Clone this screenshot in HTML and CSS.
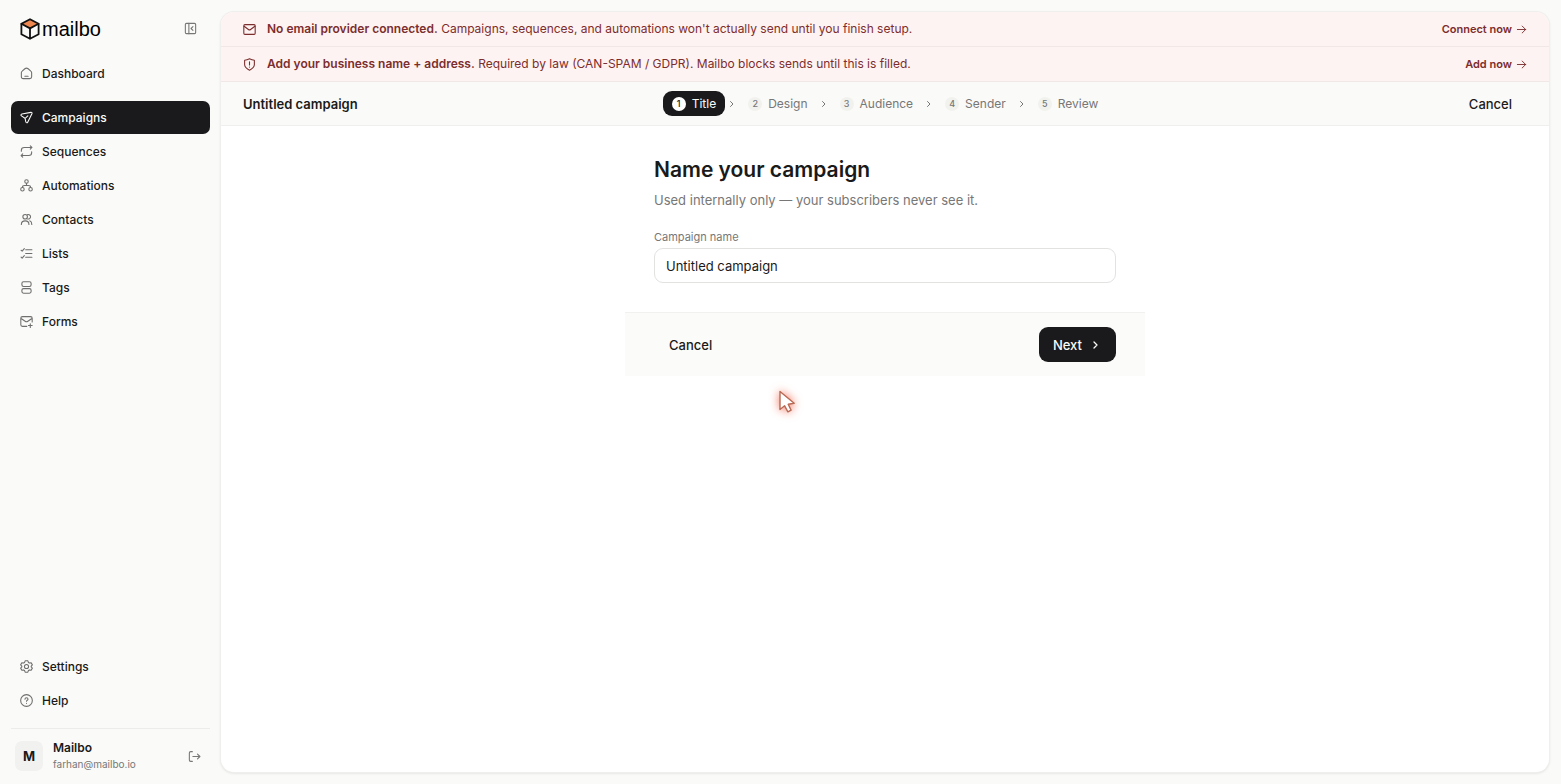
FILE: index.html
```html
<!DOCTYPE html>
<html lang="en">
<head>
  <meta charset="UTF-8" />
  <title>Untitled campaign - Mailbo</title>
  <meta name="viewport" content="width=device-width, initial-scale=1.0" />
  <link rel="stylesheet" href="styles.css">
</head>
<body>
  <div class="app">

    <!-- Sidebar -->
    <aside class="sidebar">
      <div class="brand-row">
        <a href="#" class="brand">
          <svg class="brand-mark" viewBox="0 0 20 22">
            <path d="M10 1.2 18.6 5.8 10 10.4 1.4 5.8Z" fill="#ee8650"/>
            <path d="M1.4 5.8v10.4L10 20.8l8.6-4.6V5.8M10 10.4v10.4"/>
          </svg>
          <span class="brand-name">mailbo</span>
        </a>
        <button class="icon-button" aria-label="Collapse sidebar">
          <svg class="icon" viewBox="0 0 24 24"><rect x="2.5" y="2.5" width="19" height="19" rx="2"/><path d="M9 2.5v19M16.500 8.500 13 12l3.500 3.500"/></svg>
        </button>
      </div>

      <nav class="nav nav-main">
        <a href="#" class="nav-item nav-home">
          <svg class="icon" viewBox="0 0 24 24"><path d="M2.500 10.500c0-1.300.5-2.200 1.500-3L9 3.300c1.800-1.500 4.200-1.500 6 0L20 7.500c1 .8 1.500 1.700 1.500 3V18c0 2.300-1.200 3.500-3.500 3.500H6c-2.300 0-3.500-1.200-3.500-3.500ZM9 17h6"/></svg>
          Dashboard
        </a>
        <a href="#" class="nav-item active">
          <svg class="icon" viewBox="0 0 24 24"><path d="M20 2.500 3.500 5.500c-2 .4-2.300 2.500-.8 3.500l5.800 3.800c.7.500 1 1 1.100 1.800l1.200 5.700c.4 1.800 2.600 2 3.400.4L22 5c.7-1.500-.4-2.800-2-2.500ZM9.500 13.500 14.500 9"/></svg>
          Campaigns
        </a>
        <a href="#" class="nav-item">
          <svg class="icon" viewBox="0 0 24 24"><path d="M19 1.500 22 4.500l-3 3M22 4.500H8c-3.500 0-5.500 1.500-5.500 5v2M5 22.500 2 19.500l3-3M2 19.500h14c3.500 0 5.500-1.500 5.500-5v-2"/></svg>
          Sequences
        </a>
        <a href="#" class="nav-item">
          <svg class="icon" viewBox="0 0 24 24"><circle cx="12" cy="4.500" r="3.200"/><circle cx="4.500" cy="19" r="3.200"/><circle cx="19.500" cy="19" r="3.200"/><path d="M12 8v4M4.500 15.500c0-2.500 2-3.500 4-3.500h7c2 0 4 1 4 3.500"/></svg>
          Automations
        </a>
        <a href="#" class="nav-item">
          <svg class="icon" viewBox="0 0 24 24"><circle cx="9.500" cy="7" r="4.200"/><path d="M14 3a4.200 4.200 0 1 1 0 8M2.500 21c0-4.500 2.500-6.500 7-6.500s7 2 7 6.500M18 14.500c2.500.8 3.800 2.800 3.800 6.500"/></svg>
          Contacts
        </a>
        <a href="#" class="nav-item">
          <svg class="icon" viewBox="0 0 24 24"><path d="M10.500 5H22M10.500 12H22M10.500 19H22M2 6l2 1.500L8 3M2 18.500 4 20.500 8 16"/></svg>
          Lists
        </a>
        <a href="#" class="nav-item">
          <svg class="icon" viewBox="0 0 24 24"><rect x="3.500" y="1.500" width="17" height="8.500" rx="3"/><rect x="3.500" y="14" width="17" height="8.500" rx="3"/></svg>
          Tags
        </a>
        <a href="#" class="nav-item">
          <svg class="icon" viewBox="0 0 24 24"><path d="M12.500 21H4.500c-2 0-3-1-3-3V6c0-2 1-3 3-3h15c2 0 3 1 3 3v7M2 6.500l7.500 5c1.700 1.200 3.300 1.200 5 0l7.500-5M19 16v7M15.500 19.500h7"/></svg>
          Forms
        </a>
      </nav>

      <nav class="nav nav-bottom">
        <a href="#" class="nav-item">
          <svg class="icon" viewBox="0 0 24 24"><path d="M9.500 1.500h5l1 3 2 1.200 3.100-.7 2.200 4-2.100 2.200v1.600l2.100 2.200-2.200 4-3.100-.7-2 1.200-1 3h-5l-1-3-2-1.200-3.100.7-2.200-4 2.100-2.200v-1.600L1.200 9l2.200-4 3.100.7 2-1.200Z"/><circle cx="12" cy="12" r="3.800"/></svg>
          Settings
        </a>
        <a href="#" class="nav-item">
          <svg class="icon" viewBox="0 0 24 24"><circle cx="12" cy="12" r="10.800"/><path d="M9.200 9.500c0-1.500 1.200-2.700 2.800-2.700s2.800 1.200 2.800 2.700c0 2-2.800 2-2.800 4M12 17v.3"/></svg>
          Help
        </a>
      </nav>

      <div class="account">
        <div class="avatar">M</div>
        <div class="account-info">
          <div class="account-name">Mailbo</div>
          <div class="account-email">farhan@mailbo.io</div>
        </div>
        <button class="icon-button" aria-label="Log out">
          <svg class="icon" viewBox="0 0 24 24"><path d="M8 3H5C3.500 3 2.500 4 2.500 5.500v13C2.500 20 3.500 21 5 21h3M9 12h13M17.500 7.500 22 12l-4.500 4.500"/></svg>
        </button>
      </div>
    </aside>

    <!-- Main panel -->
    <main class="panel">
      <div class="banner">
        <svg class="icon" viewBox="0 0 24 24"><rect x="1.500" y="3" width="21" height="18" rx="2"/><path d="m2 6 8 6c1.300 1 2.700 1 4 0l8-6"/></svg>
        <p class="banner-text"><strong>No email provider connected.</strong> Campaigns, sequences, and automations won't actually send until you finish setup.</p>
        <a href="#" class="banner-link">Connect now
          <svg class="arrow" viewBox="0 0 24 24"><path d="M3 12h18M13.500 4.500 21 12l-7.500 7.500"/></svg>
        </a>
      </div>
      <div class="banner">
        <svg class="icon" viewBox="0 0 24 24"><path d="M12 1.500c3 1.500 5.500 2.300 9 2.500v8c0 5-4 8-9 10.500C7 20 3 17 3 12V4c3.500-.2 6-1 9-2.500ZM12 7v6M12 16.500v.3"/></svg>
        <p class="banner-text"><strong>Add your business name + address.</strong> Required by law (CAN-SPAM / GDPR). Mailbo blocks sends until this is filled.</p>
        <a href="#" class="banner-link">Add now
          <svg class="arrow" viewBox="0 0 24 24"><path d="M3 12h18M13.500 4.500 21 12l-7.500 7.500"/></svg>
        </a>
      </div>

      <header class="wizard-bar">
        <div class="wizard-title">Untitled campaign</div>
        <ol class="steps">
          <li class="step current"><span class="step-number">1</span>Title</li>
          <li class="step-sep"><svg viewBox="0 0 8 8"><path d="m2.500 1.500 2.500 2.500-2.500 2.500"/></svg></li>
          <li class="step"><span class="step-number">2</span>Design</li>
          <li class="step-sep"><svg viewBox="0 0 8 8"><path d="m2.500 1.500 2.500 2.500-2.500 2.500"/></svg></li>
          <li class="step"><span class="step-number">3</span>Audience</li>
          <li class="step-sep"><svg viewBox="0 0 8 8"><path d="m2.500 1.500 2.500 2.500-2.500 2.500"/></svg></li>
          <li class="step"><span class="step-number">4</span>Sender</li>
          <li class="step-sep"><svg viewBox="0 0 8 8"><path d="m2.500 1.500 2.500 2.500-2.500 2.500"/></svg></li>
          <li class="step"><span class="step-number">5</span>Review</li>
        </ol>
        <div class="wizard-actions">
          <button class="text-button">Cancel</button>
        </div>
      </header>

      <form class="wizard-form">
        <div class="form-body">
          <h1>Name your campaign</h1>
          <p class="hint">Used internally only — your subscribers never see it.</p>
          <label for="campaignName">Campaign name</label>
          <input type="text" id="campaignName" value="Untitled campaign">
        </div>
        <div class="form-footer">
          <button type="button" class="text-button">Cancel</button>
          <button type="button" class="next-button">Next
            <svg viewBox="0 0 12 12"><path d="m4 3 3 3-3 3"/></svg>
          </button>
        </div>
      </form>
    </main>
  </div>

  <!-- Pointer -->
  <svg class="pointer" viewBox="0 0 18 24"><path d="M2 1.500v18l4.600-3.700 3.300 6 3.200-1.700-2.900-5.800 6-1Z"/></svg>
</body>
</html>
```

FILE: styles.css
```css
* {
  box-sizing: border-box;
}

body {
  margin: 0;
  font-family: Inter, "Liberation Sans", sans-serif;
  font-size: 13px;
  line-height: 16px;
  color: #1a1a1a;
  background-color: #fafaf8;
}

a {
  color: inherit;
  text-decoration: none;
}

button {
  font: inherit;
  color: inherit;
  background: none;
  border: 0;
  padding: 0;
  cursor: pointer;
}

svg {
  display: block;
  flex: none;
  fill: none;
  stroke: currentColor;
  stroke-linecap: round;
  stroke-linejoin: round;
}

.app {
  display: flex;
  min-height: 100vh;
}

.icon {
  width: 13px;
  height: 13px;
  stroke-width: 2;
}

/* Sidebar */
.sidebar {
  display: flex;
  flex-direction: column;
  width: 220px;
  flex: none;
  padding: 16px 10px 12px 11px;
}

.brand-row {
  display: flex;
  align-items: center;
  justify-content: space-between;
  padding: 0 13px 0 9px;
  height: 25px;
}

.brand {
  display: flex;
  align-items: center;
  gap: 2px;
}

.brand-mark {
  width: 20px;
  height: 22px;
  stroke: #111;
  stroke-width: 1.8;
}

.brand-name {
  font-family: "Liberation Sans", Arial, sans-serif;
  font-size: 20px;
  line-height: 22px;
  color: #000;
}

.icon-button {
  color: #777;
}

.nav {
  display: flex;
  flex-direction: column;
  gap: 1px;
}

.nav-main {
  margin-top: 16px;
}

.nav-bottom {
  margin-top: auto;
}

.nav-item {
  display: flex;
  align-items: center;
  gap: 9px;
  height: 33px;
  padding: 0 9px;
  border-radius: 7px;
  font-size: 12px;
  font-weight: 500;
}

.nav-item .icon {
  color: #6f6f6f;
}

.nav-home {
  margin-bottom: 10px;
}

.nav-item.active {
  background-color: #1a1a1c;
  color: #fafaf8;
}

.nav-item.active .icon {
  color: #fafaf8;
}

.account {
  display: flex;
  align-items: center;
  margin-top: 11px;
  padding: 11px 9px 0 4px;
  border-top: 1px solid #ececea;
}

.avatar {
  width: 28px;
  height: 30px;
  margin-right: 10px;
  border-radius: 7px;
  background-color: #f1f1ef;
  font-weight: 700;
  line-height: 30px;
  text-align: center;
}

.account-info {
  flex: 1;
}

.account-name {
  font-size: 12px;
  font-weight: 600;
}

.account-email {
  font-size: 10px;
  color: #777;
}

/* Main panel */
.panel {
  flex: 1;
  min-width: 0;
  margin: 12px 12px 12px 1px;
  background-color: #fff;
  border-radius: 13px;
  box-shadow: 0 0 0 1px #efefed, 0 1px 3px rgba(0, 0, 0, 0.15);
  overflow: hidden;
}

.banner {
  display: flex;
  align-items: center;
  height: 35px;
  padding: 0 22px;
  border-bottom: 1px solid #f0e8e6;
  background-color: #fcf3f2;
  color: #7c2d2d;
  font-size: 12px;
}

.banner-text {
  flex: 1;
  margin: 0 11px;
}

.banner strong,
.banner-link {
  font-weight: 600;
}

.banner-link {
  display: flex;
  align-items: center;
  gap: 4px;
  font-size: 11px;
}

.arrow {
  width: 11px;
  height: 11px;
  stroke-width: 2;
}

.wizard-bar {
  display: grid;
  grid-template-columns: 1fr auto 1fr;
  align-items: center;
  height: 44px;
  padding: 0 22px;
  border-bottom: 1px solid #efefed;
  background-color: #fafaf8;
}

.wizard-title {
  font-weight: 600;
}

.steps {
  display: flex;
  align-items: center;
  margin: 0;
  padding: 0;
  list-style: none;
  font-size: 12px;
  color: #777;
}

.step {
  display: flex;
  align-items: center;
  gap: 6px;
  height: 25px;
  padding: 0 9px;
  border-radius: 9px;
}

.step-number {
  width: 14px;
  height: 14px;
  border-radius: 7px;
  background-color: #f1f1ee;
  font-size: 9px;
  font-weight: 500;
  line-height: 14px;
  text-align: center;
}

.step.current {
  background-color: #1a1a1c;
  color: #fafaf8;
}

.step.current .step-number {
  background-color: #fff;
  color: #1a1a1c;
}

.step-sep svg {
  width: 14px;
  height: 8px;
}

.wizard-actions {
  text-align: right;
}

.text-button {
  padding: 8px 15px;
  font-weight: 500;
}

/* Form */
.wizard-form {
  width: 520px;
  max-width: 100%;
  margin: 0 auto;
}

.form-body {
  display: flex;
  flex-direction: column;
  padding: 29px;
}

h1 {
  margin: 0;
  font-size: 21px;
  line-height: 30px;
  font-weight: 600;
}

.hint {
  margin: 7px 0 21px;
  color: #777;
}

label {
  font-size: 11px;
  color: #777;
}

input {
  height: 35px;
  margin-top: 3px;
  padding: 0 11px;
  border: 1px solid #e2e2e0;
  border-radius: 9px;
  background-color: #fff;
  font: inherit;
  color: inherit;
}

.form-footer {
  display: flex;
  align-items: center;
  justify-content: space-between;
  padding: 14px 29px;
  border-top: 1px solid #f1f1ef;
  background-color: #fbfbf9;
}

.next-button {
  display: flex;
  align-items: center;
  gap: 8px;
  height: 35px;
  padding: 0 14px;
  border-radius: 9px;
  background-color: #1a1a1c;
  color: #fafaf8;
  font-weight: 500;
}

.next-button svg {
  width: 12px;
  height: 12px;
  stroke-width: 1.3;
}

.pointer {
  position: absolute;
  left: 778px;
  top: 390px;
  width: 18px;
  height: 24px;
  fill: #fff;
  stroke: #b96a55;
  stroke-width: 1.4;
  filter: drop-shadow(0 0 5px rgba(240, 80, 50, 0.8));
  pointer-events: none;
}
```
